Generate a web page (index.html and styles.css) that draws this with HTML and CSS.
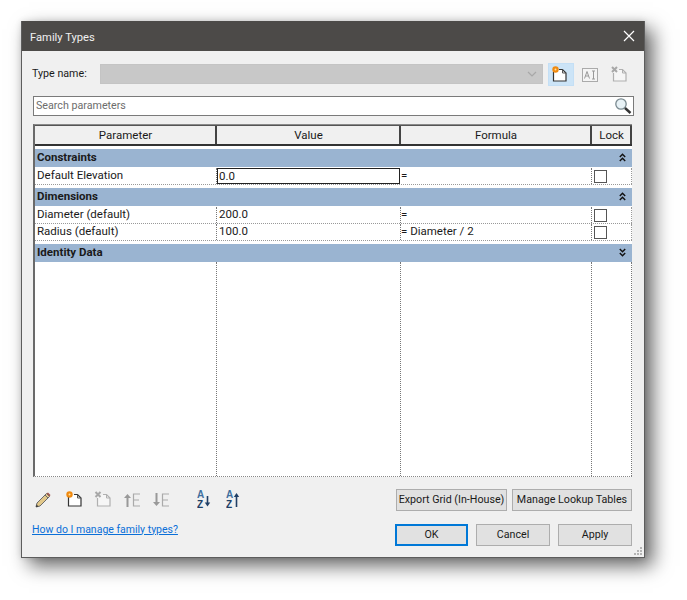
FILE: index.html
```html
<!DOCTYPE html>
<html lang="en">
<head>
<meta charset="utf-8">
<title>Family Types</title>
<link rel="stylesheet" href="styles.css">
</head>
<body>
<div class="window">
  <div class="titlebar">
    <span class="title-text">Family Types</span>
    <svg class="close" width="12" height="12" viewBox="0 0 12 12"><path d="M1 1l10 10M11 1L1 11" stroke="#fff" stroke-width="1.2" fill="none"/></svg>
  </div>
  <div class="content">
    <div class="type-row">
      <label class="type-label">Type name:</label>
      <div class="combo"><svg width="10" height="6" viewBox="0 0 10 6"><path d="M1 1l4 4 4-4" stroke="#a8a8a8" stroke-width="1.2" fill="none"/></svg></div>
      <div class="type-tools">
        <span class="tool tool-active">
          <svg width="20" height="20" viewBox="0 0 20 20"><path d="M2.500 7v9h12.500V8l-3.500-3.500H8" fill="#fff" stroke="#333" stroke-width="1.200"/><path d="M11.500 4.500V8H15" fill="none" stroke="#555"/><circle cx="4.500" cy="4.500" r="3.200" fill="#f08a10"/><circle cx="4.500" cy="4.500" r="1" fill="#ffe0a0"/></svg>
        </span>
        <span class="tool">
          <svg width="16" height="14" viewBox="0 0 16 14"><rect x=".5" y=".5" width="15" height="13" fill="#f4f4f4" stroke="#aaa"/><path d="M2.500 10.500L5 3.500l2.500 7M3.500 8h3" fill="none" stroke="#999"/><path d="M10 3h3M11.500 3v8M10 11h3" fill="none" stroke="#999"/></svg>
        </span>
        <span class="tool">
          <svg width="20" height="20" viewBox="0 0 20 20"><path d="M4.500 8v8h12.500V8l-3.500-3.500H10" fill="#f6f6f6" stroke="#b0b0b0" stroke-width="1.200"/><path d="M13.500 4.500V8H17" fill="none" stroke="#b0b0b0"/><path d="M3 2l5 5M8 2L3 7" stroke="#a8a8a8" stroke-width="2" fill="none"/></svg>
        </span>
      </div>
    </div>

    <div class="search">
      <span>Search parameters</span>
      <svg width="18" height="17" viewBox="0 0 18 17"><circle cx="7" cy="7" r="5.200" fill="#e8f2f6" stroke="#7a8a90" stroke-width="1.300"/><path d="M11 11l5.500 5" stroke="#333" stroke-width="2.400"/></svg>
    </div>

    <div class="table">
      <div class="thead">
        <div class="th">Parameter</div>
        <div class="th">Value</div>
        <div class="th">Formula</div>
        <div class="th">Lock</div>
      </div>

      <div class="band"><span>Constraints</span><svg class="chev" width="7" height="9" viewBox="0 0 7 9"><path d="M.8 4L3.500 1.200 6.200 4M.8 8L3.500 5.200 6.200 8" fill="none" stroke="#111" stroke-width="1.400"/></svg></div>
      <div class="row">
        <div class="cell">Default Elevation</div>
        <div class="cell cell-edit">0.0</div>
        <div class="cell cell-formula">=</div>
        <div class="cell cell-lock"><span class="check"></span></div>
      </div>

      <div class="band"><span>Dimensions</span><svg class="chev" width="7" height="9" viewBox="0 0 7 9"><path d="M.8 4L3.500 1.200 6.200 4M.8 8L3.500 5.200 6.200 8" fill="none" stroke="#111" stroke-width="1.400"/></svg></div>
      <div class="row">
        <div class="cell">Diameter (default)</div>
        <div class="cell">200.0</div>
        <div class="cell cell-formula">=</div>
        <div class="cell cell-lock"><span class="check"></span></div>
      </div>
      <div class="row">
        <div class="cell">Radius (default)</div>
        <div class="cell">100.0</div>
        <div class="cell cell-formula">= Diameter / 2</div>
        <div class="cell cell-lock"><span class="check"></span></div>
      </div>

      <div class="band"><span>Identity Data</span><svg class="chev" width="7" height="9" viewBox="0 0 7 9"><path d="M.8 1L3.500 3.800 6.200 1M.8 5L3.500 7.800 6.200 5" fill="none" stroke="#111" stroke-width="1.400"/></svg></div>
      <div class="row row-empty">
        <div class="cell"></div><div class="cell"></div><div class="cell"></div><div class="cell"></div>
      </div>
    </div>

    <div class="tool-row">
      <div class="icons">
        <svg width="18" height="18" viewBox="0 0 18 18"><path d="M2 16l1-4L12.500 2.500l3 3L6 15z" fill="#e2c88a" stroke="#6b6b6b"/><path d="M11 4l3 3" stroke="#6b6b6b"/><path d="M12.500 2.500l3 3 1-1.500-2.500-2.500z" fill="#a05a50"/><path d="M2 16l.6-2.500 1.900 1.900z" fill="#333"/></svg>
        <svg class="nudge" width="18" height="20" viewBox="0 0 18 20"><path d="M4.500 7v9h12.500V8l-3.500-3.500H10" fill="#fff" stroke="#333" stroke-width="1.200"/><path d="M13.500 4.500V8H17" fill="none" stroke="#555"/><circle cx="5.500" cy="4.500" r="3.200" fill="#f08a10"/><circle cx="5.500" cy="4.500" r="1" fill="#ffe0a0"/></svg>
        <svg width="18" height="20" viewBox="0 0 18 20"><path d="M4.500 8v8h12.500V8l-3.500-3.500H10" fill="#f6f6f6" stroke="#b0b0b0" stroke-width="1.200"/><path d="M13.500 4.500V8H17" fill="none" stroke="#b0b0b0"/><path d="M2.500 2l5 5M7.500 2l-5 5" stroke="#a8a8a8" stroke-width="2" fill="none"/></svg>
        <svg class="nudge" width="18" height="16" viewBox="0 0 18 16"><path d="M4.500 15V5" stroke="#999" stroke-width="2"/><path d="M1 6l3.500-4L8 6z" fill="#999"/><path d="M17 2h-6.500v12H17M10.500 8H16" fill="none" stroke="#aaa" stroke-width="1.200"/></svg>
        <svg width="18" height="16" viewBox="0 0 18 16"><path d="M4.500 1v10" stroke="#999" stroke-width="2"/><path d="M1 10l3.500 4L8 10z" fill="#999"/><path d="M17 2h-6.500v12H17M10.500 8H16" fill="none" stroke="#aaa" stroke-width="1.200"/></svg>
        <svg class="gap-sort" width="15" height="20" viewBox="0 0 15 20"><text class="sort-a" x="0" y="7.500">A</text><text class="sort-z" x="0" y="17.500">Z</text><path d="M10.500 6v8" stroke="#1f3f66" stroke-width="1.600"/><path d="M7.800 12.500l2.700 4 2.700-4z" fill="#1f3f66"/></svg>
        <svg class="gap-sort2" width="15" height="20" viewBox="0 0 15 20"><text class="sort-a" x="0" y="7.500">A</text><text class="sort-z" x="0" y="17.500">Z</text><path d="M10.500 6v11" stroke="#1f3f66" stroke-width="1.600"/><path d="M7.800 7l2.700-4 2.700 4z" fill="#1f3f66"/></svg>
      </div>
      <div class="tool-buttons">
        <button class="btn btn-export">Export Grid (In-House)</button>
        <button class="btn btn-lookup">Manage Lookup Tables</button>
      </div>
    </div>

    <div class="bottom-row">
      <a class="help" href="#">How do I manage family types?</a>
      <div class="actions">
        <button class="btn btn-ok">OK</button>
        <button class="btn btn-action">Cancel</button>
        <button class="btn btn-action">Apply</button>
      </div>
    </div>
  </div>
  <svg class="grip" width="10" height="10" viewBox="0 0 10 10"><path d="M7 1h2v2H7zM4 4h2v2H4zM7 4h2v2H7zM1 7h2v2H1zM4 7h2v2H4zM7 7h2v2H7z" fill="#b4b4b4"/></svg>
</div>
</body>
</html>
```

FILE: styles.css
```css
* { box-sizing: border-box; }

html, body { height: 100%; }

body {
  margin: 0;
  padding: 21px 0 0 21px;
  background: #fff;
  font-family: Roboto, "Noto Sans", sans-serif;
  font-size: 10.700px;
  color: #1a1a1a;
  overflow: hidden;
}

.window {
  position: relative;
  width: 624px;
  height: 537px;
  background: #f0f0f0;
  border: 1px solid #5d5d5d;
  border-top: 0;
  box-shadow: 8px 8px 18px rgba(0, 0, 0, .6), 0 0 6px rgba(0, 0, 0, .12);
}

.titlebar {
  display: flex;
  align-items: center;
  justify-content: space-between;
  height: 30px;
  padding: 0 9px 0 8px;
  background: #4c4a48;
  color: #f0f0f0;
  font-size: 11.200px;
}

.title-text { padding-top: 2px; }

.content { padding: 13px 11px 0 10px; }

.type-row { display: flex; align-items: flex-start; }

.type-label { width: 68px; line-height: 20px; }

.combo {
  display: flex;
  align-items: center;
  justify-content: flex-end;
  width: 443px;
  height: 20px;
  padding-right: 5px;
  background: #c8c8c8;
  border: 1px solid #c4c4c4;
}

.type-tools { display: flex; align-items: center; margin: -1px 0 0 5px; gap: 3px; }

.tool {
  display: flex;
  align-items: center;
  justify-content: center;
  width: 26px;
  height: 23px;
  border: 1px solid transparent;
}

.tool-active { background: #cce4f7; border-color: #c4dff5; }

.search {
  display: flex;
  align-items: center;
  justify-content: space-between;
  width: 601px;
  height: 20px;
  margin: 10px 0 0 1px;
  padding: 0 1px 2px 2px;
  background: #fff;
  border: 1px solid #7a7a7a;
  color: #6d6d6d;
}

.table {
  display: flex;
  flex-direction: column;
  width: 599px;
  height: 353px;
  margin: 8px 0 0 1px;
  border-left: 2px solid #6a6a6a;
  border-top: 1px solid #8a8a8a;
  border-bottom: 1px dotted #888;
  background: #fff;
  font-size: 11.500px;
}

.thead, .row {
  display: grid;
  grid-template-columns: 182px 184px 191px 40px;
}

.thead {
  height: 21px;
  background: #f0f0f0;
  border-top: 1px solid #555;
  border-bottom: 2px solid #333;
}

.th {
  padding-left: 1px;
  border-right: 2px solid #444;
  text-align: center;
  line-height: 18px;
}

.band {
  display: flex;
  align-items: center;
  justify-content: space-between;
  height: 18px;
  margin-top: 3px;
  padding: 0 6px 2px 2px;
  background: #9ab4d1;
  font-weight: 700;
}

.row {
  height: 17px;
  background: #fff;
  border-bottom: 1px dotted #999;
}

.band + .row { margin-top: 1px; }

.cell {
  padding-left: 2px;
  border-right: 1px dotted #777;
  line-height: 14px;
  overflow: hidden;
}

.cell-formula { padding-left: 0; }

.cell-edit {
  height: 16px;
  margin-right: 1px;
  padding-left: 1px;
  border: 1px solid #222;
}

.cell-lock { display: flex; align-items: center; padding-left: 2px; border-right: 1px dotted #999; }

.check {
  width: 13px;
  height: 13px;
  background: #fff;
  border: 1px solid #555;
}

.band + .row-empty { flex: 1; border-bottom: 0; margin-top: 0; }

.tool-row {
  display: flex;
  align-items: center;
  justify-content: space-between;
  height: 22px;
  margin-top: 12px;
  padding-left: 2px;
}

.icons { display: flex; align-items: center; gap: 11px; }

.nudge { margin-left: 1px; }
.gap-sort { margin-left: 16px; }
.gap-sort2 { margin-left: 3px; }

.sort-a, .sort-z {
  font-family: "Liberation Sans", sans-serif;
  font-size: 10px;
  font-weight: 700;
}

.sort-a { fill: #3f6f9f; }
.sort-z { fill: #1f3f66; }

.tool-buttons { display: flex; gap: 5px; margin-right: 1px; }

.btn {
  height: 22px;
  padding: 0 0 2px;
  background: #e1e1e1;
  border: 1px solid #adadad;
  font: inherit;
  color: #1a1a1a;
  white-space: nowrap;
}

.btn-export { width: 111px; }
.btn-lookup { width: 120px; }

.bottom-row {
  display: flex;
  align-items: center;
  justify-content: space-between;
  height: 22px;
  margin-top: 13px;
}

.help { margin-top: -12px; font-size: 10.500px; color: #0a6fd8; }

.actions { display: flex; gap: 8px; margin-right: 1px; }

.btn-ok { width: 73px; border: 2px solid #0078d7; }
.btn-action { width: 74px; }

.grip { position: absolute; right: 1px; bottom: 1px; }
```
